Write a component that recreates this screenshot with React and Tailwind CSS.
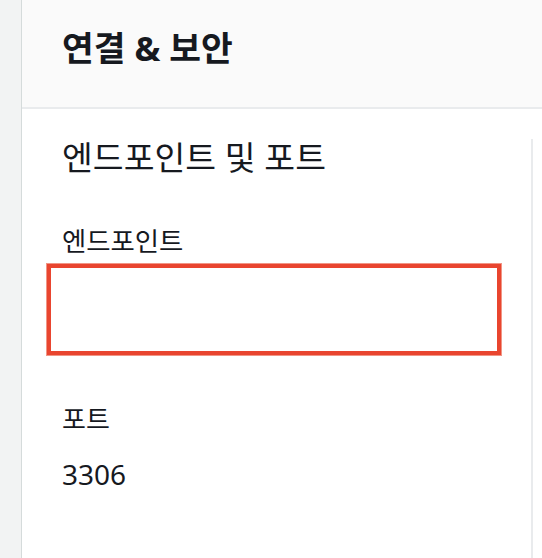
export default function App() {
  return (
    <div className="flex min-h-screen bg-[#f2f3f3] font-['Noto_Sans','Noto_Sans_CJK_KR',sans-serif] text-[#16191f]">
      <div className="w-[21px] shrink-0" />
      <div className="flex-1 flex flex-col border-l border-[#d5dbdb] bg-white min-h-screen">
        {/* header */}
        <div className="h-[109px] bg-[#fafafa] border-b-2 border-[#e9ebed] pl-[40px] pt-[28px]">
          <h1 className="text-[34.5px] leading-[40px] font-bold">연결 &amp; 보안</h1>
        </div>

        {/* body */}
        <div className="flex-1 flex">
          <div className="flex-1 mt-[30px] mr-[9px] border-r-2 border-[#e9ebed] pl-[40px]">
            <h2 className="text-[33.5px] leading-[36px] font-normal">엔드포인트 및 포트</h2>

            <div className="mt-[51px] text-[26.4px] leading-[30px]">엔드포인트</div>
            <div className="mt-[8px] -ml-[15px] w-[454px] h-[91px] border-4 border-[#e9452f] shadow-[0_0_0_1px_#f19585]" />

            <div className="mt-[49px] text-[26px] leading-[30px]">포트</div>
            <div className="mt-[25px] text-[28px] leading-[30px]">3306</div>
          </div>
        </div>
      </div>
    </div>
  );
}
